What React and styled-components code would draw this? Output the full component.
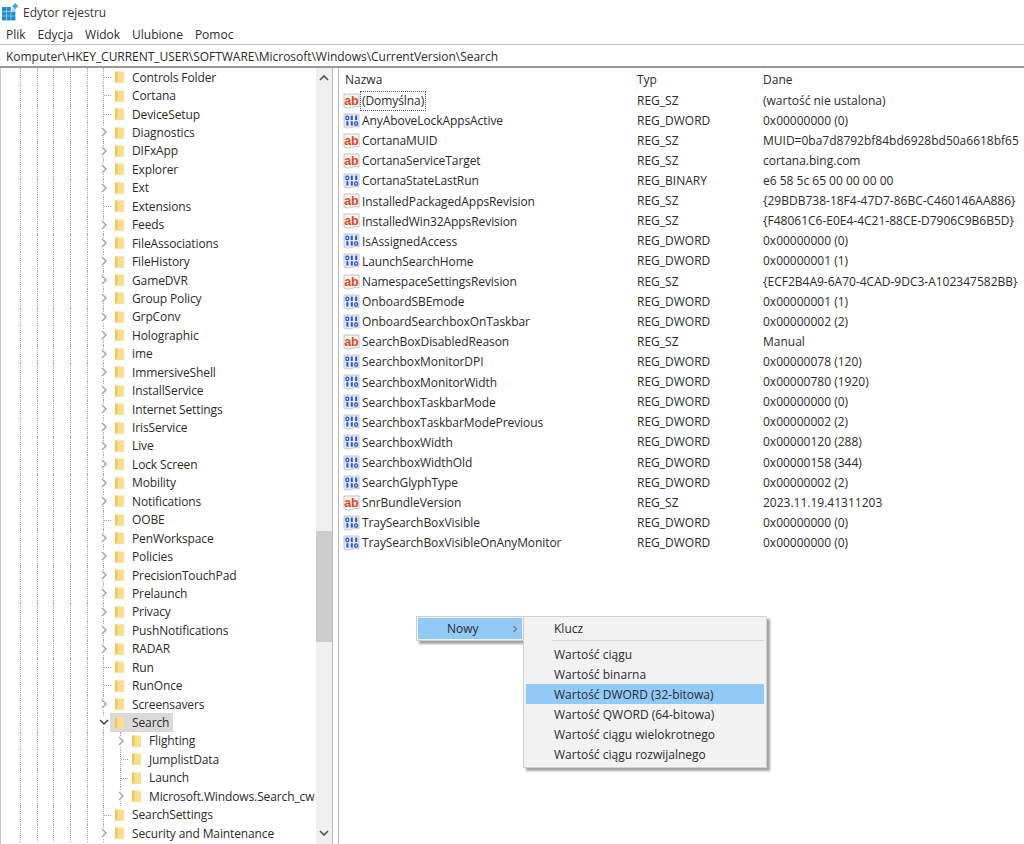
import React from "react";
import styled, { createGlobalStyle } from "styled-components";

const GlobalStyle = createGlobalStyle`
  html, body {
    margin: 0;
    padding: 0;
    background: #fff;
    overflow: hidden;
  }
  body {
    font-family: "Open Sans", "Noto Sans", "Liberation Sans", sans-serif;
    color: #2b2b2b;
  }
`;

const Window = styled.div`
  position: relative;
  width: 1024px;
  height: 844px;
  display: flex;
  flex-direction: column;
  overflow: hidden;
  background: #fff;
  font-size: 12px;
`;

const TitleBar = styled.div`
  height: 24px;
  display: flex;
  align-items: center;
  gap: 4px;
  padding-left: 2px;
  font-size: 12px;
  color: #333;
`;

const MenuBar = styled.div`
  height: 20px;
  display: flex;
  align-items: center;
  padding-left: 6px;
  gap: 12px;
`;

const AddressBar = styled.div`
  height: 21px;
  line-height: 23px;
  padding-left: 6px;
  border-top: 1px solid #c4c4c4;
  border-bottom: 2px solid #9a9a9a;
  box-sizing: content-box;
  letter-spacing: -0.03px;
  white-space: nowrap;
  overflow: hidden;
`;

const Panes = styled.div`
  flex: 1;
  display: flex;
  min-height: 0;
`;

const TreePane = styled.div`
  position: relative;
  width: 332px;
  display: flex;
  border-left: 1px solid #c8c8c8;
  box-sizing: border-box;
`;

const TreeList = styled.div`
  flex: 1;
  padding-top: 0;
  overflow: hidden;
  letter-spacing: -0.12px;
`;

const TreeRow = styled.div`
  position: relative;
  height: 18.44px;
  display: flex;
  align-items: center;
  padding-left: ${(p) => (p.$child ? 130 : 113)}px;
  white-space: nowrap;
`;

const Guide = styled.span`
  position: absolute;
  top: 0;
  bottom: 0;
  left: ${(p) => p.$x}px;
  border-left: 1px dotted #a8a8a8;
`;

const Tick = styled.span`
  position: absolute;
  top: 9px;
  left: ${(p) => p.$x}px;
  width: 7px;
  border-top: 1px dotted #a8a8a8;
`;

const Expander = styled.svg`
  position: absolute;
  left: ${(p) => p.$x}px;
  top: 4px;
  width: 10px;
  height: 10px;
  background: #fff;
`;

const RowLabel = styled.span`
  margin-left: 6px;
  padding: 0 1px;
`;

const SelectedBand = styled.span`
  position: absolute;
  left: 109px;
  top: 0;
  width: 63px;
  height: 100%;
  background: #d9d9d9;
`;

const RowContent = styled.span`
  position: relative;
  display: flex;
  align-items: center;
`;

const Scrollbar = styled.div`
  width: 16px;
  display: flex;
  flex-direction: column;
  background: #f0f0f0;
`;

const ScrollButton = styled.div`
  height: ${(p) => p.$height}px;
  display: flex;
  align-items: center;
  justify-content: center;
`;

const ScrollTrack = styled.div`
  flex: 1;
  padding-top: 443px;
`;

const ScrollThumb = styled.div`
  height: 111px;
  background: #cdcdcd;
`;

const Splitter = styled.div`
  width: 7px;
  box-sizing: border-box;
  border: solid #b9b9b9;
  border-width: 0 1px;
`;

const ListPane = styled.div`
  flex: 1;
  min-width: 0;
  display: flex;
  flex-direction: column;
`;

const ListHeader = styled.div`
  height: 23px;
  display: grid;
  grid-template-columns: 292px 126px 1fr;
  align-items: center;
  padding-left: 6px;
`;

const HeaderCell = styled.div`
  height: 100%;
  line-height: 24px;
  border-right: ${(p) => (p.$last ? "none" : "1px solid #f0f0f0")};
`;

const ListRow = styled.div`
  height: 20.12px;
  display: grid;
  grid-template-columns: 298px 126px 1fr;
  align-items: center;
  white-space: nowrap;
`;

const NameCell = styled.div`
  display: flex;
  align-items: center;
  padding-left: 4px;
  letter-spacing: -0.08px;
`;

const NameText = styled.span`
  padding: 0 2px;
  line-height: 20px;
  outline: ${(p) => (p.$focus ? "1px dotted #555" : "none")};
  outline-offset: -1px;
`;

const ValueCell = styled.span`
  padding-bottom: 2px;
`;

const Menu = styled.div`
  position: absolute;
  box-sizing: border-box;
  background: #f2f2f2;
  border: 1px solid #d0d0d0;
  padding: 2px;
  box-shadow: 3px 3px 2px rgba(90, 90, 90, 0.55);
`;

const ParentMenu = styled(Menu)`
  left: 416px;
  top: 616px;
  width: 108px;
  height: 25px;
  padding: 1px;
`;

const SubMenu = styled(Menu)`
  left: 523px;
  top: 616px;
  width: 244px;
  height: 152px;
  padding-top: 1px;
`;

const ParentItem = styled.div`
  height: 21px;
  display: flex;
  align-items: center;
  justify-content: space-between;
  padding: 0 4px 0 29px;
  background: #91c9f7;
`;

const MenuItem = styled.div`
  height: 20px;
  line-height: 21px;
  padding-left: 28px;
  background: ${(p) => (p.$active ? "#91c9f7" : "transparent")};
`;

const MenuSeparator = styled.div`
  height: 1px;
  margin: 2px 0 3px 26px;
  background: #d7d7d7;
`;

const menuLabels = ["Plik", "Edycja", "Widok", "Ulubione", "Pomoc"];

const treeItems = [
  ["Controls Folder"],
  ["Cortana"],
  ["DeviceSetup"],
  ["Diagnostics", true],
  ["DIFxApp", true],
  ["Explorer", true],
  ["Ext", true],
  ["Extensions"],
  ["Feeds", true],
  ["FileAssociations", true],
  ["FileHistory", true],
  ["GameDVR", true],
  ["Group Policy", true],
  ["GrpConv", true],
  ["Holographic", true],
  ["ime", true],
  ["ImmersiveShell", true],
  ["InstallService", true],
  ["Internet Settings", true],
  ["IrisService", true],
  ["Live", true],
  ["Lock Screen", true],
  ["Mobility", true],
  ["Notifications", true],
  ["OOBE"],
  ["PenWorkspace", true],
  ["Policies", true],
  ["PrecisionTouchPad", true],
  ["Prelaunch", true],
  ["Privacy", true],
  ["PushNotifications", true],
  ["RADAR", true],
  ["Run"],
  ["RunOnce"],
  ["Screensavers", true],
  ["Search", true, "open"],
  ["Flighting", true, "child"],
  ["JumplistData", false, "child"],
  ["Launch", false, "child"],
  ["Microsoft.Windows.Search_cw", true, "child"],
  ["SearchSettings"],
  ["Security and Maintenance", true],
];

const values = [
  ["(Domyślna)", "REG_SZ", "(wartość nie ustalona)"],
  ["AnyAboveLockAppsActive", "REG_DWORD", "0x00000000 (0)"],
  ["CortanaMUID", "REG_SZ", "MUID=0ba7d8792bf84bd6928bd50a6618bf65"],
  ["CortanaServiceTarget", "REG_SZ", "cortana.bing.com"],
  ["CortanaStateLastRun", "REG_BINARY", "e6 58 5c 65 00 00 00 00"],
  ["InstalledPackagedAppsRevision", "REG_SZ", "{29BDB738-18F4-47D7-86BC-C460146AA886}"],
  ["InstalledWin32AppsRevision", "REG_SZ", "{F48061C6-E0E4-4C21-88CE-D7906C9B6B5D}"],
  ["IsAssignedAccess", "REG_DWORD", "0x00000000 (0)"],
  ["LaunchSearchHome", "REG_DWORD", "0x00000001 (1)"],
  ["NamespaceSettingsRevision", "REG_SZ", "{ECF2B4A9-6A70-4CAD-9DC3-A102347582BB}"],
  ["OnboardSBEmode", "REG_DWORD", "0x00000001 (1)"],
  ["OnboardSearchboxOnTaskbar", "REG_DWORD", "0x00000002 (2)"],
  ["SearchBoxDisabledReason", "REG_SZ", "Manual"],
  ["SearchboxMonitorDPI", "REG_DWORD", "0x00000078 (120)"],
  ["SearchboxMonitorWidth", "REG_DWORD", "0x00000780 (1920)"],
  ["SearchboxTaskbarMode", "REG_DWORD", "0x00000000 (0)"],
  ["SearchboxTaskbarModePrevious", "REG_DWORD", "0x00000002 (2)"],
  ["SearchboxWidth", "REG_DWORD", "0x00000120 (288)"],
  ["SearchboxWidthOld", "REG_DWORD", "0x00000158 (344)"],
  ["SearchGlyphType", "REG_DWORD", "0x00000002 (2)"],
  ["SnrBundleVersion", "REG_SZ", "2023.11.19.41311203"],
  ["TraySearchBoxVisible", "REG_DWORD", "0x00000000 (0)"],
  ["TraySearchBoxVisibleOnAnyMonitor", "REG_DWORD", "0x00000000 (0)"],
];

const guideLines = [20, 37, 53, 70, 87];

const gridCells = [
  [0, 0], [1, 0],
  [0, 1], [1, 1], [2, 1],
  [0, 2], [1, 2], [2, 2],
];

const AppIcon = () => (
  <svg width="17" height="18" viewBox="0 0 17 18">
    <g fill="#1c8cd6">
      {gridCells.map(([x, y]) => (
        <rect key={`${x}-${y}`} x={x * 4.6} y={4 + y * 4.6} width="4.2" height="4.2" />
      ))}
    </g>
    <rect x="10" y="5.5" width="3.6" height="3" fill="#a8d5f2" />
    <rect x="11" y="1" width="4.4" height="4.4" fill="#4aa6e4" transform="rotate(45 13.2 3.2)" />
  </svg>
);

const FolderIcon = () => (
  <svg width="11" height="14" viewBox="0 0 11 14">
    <path d="M1 1.5 H10 V13 H1 Z" fill="#fcdf8e" />
    <path d="M1 1.5 H3.5 V11 L1 13 Z" fill="#f3c654" />
  </svg>
);

const StringIcon = () => (
  <svg width="17" height="17" viewBox="0 0 17 17">
    <path d="M1 1 H16 V14 Q12 12.5 8.5 14.5 Q4 16 1 14 Z" fill="#fbf3ee" stroke="#c4c4c4" />
    <text x="1.2" y="11.5" fontFamily="Liberation Sans, sans-serif" fontWeight="700" fontSize="12.5" fill="#d84a2b">
      ab
    </text>
  </svg>
);

const bits = [
  [0, 1, 1],
  [1, 1, 0],
];

const BinaryIcon = () => (
  <svg width="17" height="17" viewBox="0 0 17 17">
    <path d="M1 1 H16 V14 Q12 12.5 8.5 14.5 Q4 16 1 14 Z" fill="#e4eafb" stroke="#c4c8d4" />
    {bits.map((row, y) =>
      row.map((bit, x) =>
        bit ? (
          <rect key={`${x}${y}`} x={3.4 + x * 4.4} y={2.6 + y * 5.6} width="2" height="4.4" fill="#2a56c6" />
        ) : (
          <rect key={`${x}${y}`} x={2.9 + x * 4.4} y={3.2 + y * 5.6} width="2.8" height="3.4" rx="1" fill="none" stroke="#2a56c6" strokeWidth="1.3" />
        )
      )
    )}
  </svg>
);

const Chevron = ({ x, open }) => (
  <Expander $x={x} viewBox="0 0 10 10">
    <path
      d={open ? "M1 3 L5 7 L9 3" : "M3 1 L7 5 L3 9"}
      fill="none"
      stroke={open ? "#404040" : "#a6a6a6"}
      strokeWidth="1.5"
    />
  </Expander>
);

const TreeItem = ({ name, expandable, kind }) => {
  const child = kind === "child";
  const open = kind === "open";
  return (
    <TreeRow $child={child}>
      {guideLines.map((x) => (
        <Guide key={x} $x={x - 1} />
      ))}
      <Guide $x={102} />
      {child && <Guide $x={119} />}
      {open && <SelectedBand />}
      {!expandable && <Tick $x={child ? 120 : 103} />}
      {expandable && <Chevron x={child ? 115 : 98} open={open} />}
      <RowContent>
        <FolderIcon />
        <RowLabel>{name}</RowLabel>
      </RowContent>
    </TreeRow>
  );
};

export default function App() {
  return (
    <Window>
      <GlobalStyle />
      <TitleBar>
        <AppIcon />
        Edytor rejestru
      </TitleBar>
      <MenuBar>
        {menuLabels.map((label) => (
          <span key={label}>{label}</span>
        ))}
      </MenuBar>
      <AddressBar>Komputer\HKEY_CURRENT_USER\SOFTWARE\Microsoft\Windows\CurrentVersion\Search</AddressBar>
      <Panes>
        <TreePane>
          <TreeList>
            {treeItems.map(([name, expandable, kind]) => (
              <TreeItem key={name} name={name} expandable={expandable} kind={kind} />
            ))}
          </TreeList>
          <Scrollbar>
            <ScrollButton $height={20}>
              <svg width="10" height="6" viewBox="0 0 10 6">
                <path d="M1 5 L5 1 L9 5" fill="none" stroke="#555" strokeWidth="1.7" />
              </svg>
            </ScrollButton>
            <ScrollTrack>
              <ScrollThumb />
            </ScrollTrack>
            <ScrollButton $height={22}>
              <svg width="10" height="6" viewBox="0 0 10 6">
                <path d="M1 1 L5 5 L9 1" fill="none" stroke="#555" strokeWidth="1.7" />
              </svg>
            </ScrollButton>
          </Scrollbar>
        </TreePane>
        <Splitter />
        <ListPane>
          <ListHeader>
            <HeaderCell>Nazwa</HeaderCell>
            <HeaderCell>Typ</HeaderCell>
            <HeaderCell $last>Dane</HeaderCell>
          </ListHeader>
          {values.map(([name, type, data], i) => (
            <ListRow key={name}>
              <NameCell>
                {type === "REG_SZ" ? <StringIcon /> : <BinaryIcon />}
                <NameText $focus={i === 0}>{name}</NameText>
              </NameCell>
              <ValueCell>{type}</ValueCell>
              <ValueCell>{data}</ValueCell>
            </ListRow>
          ))}
        </ListPane>
      </Panes>
      <ParentMenu>
        <ParentItem>
          Nowy
          <svg width="6" height="8" viewBox="0 0 6 8">
            <path d="M1.5 1 L4.5 4 L1.5 7" fill="none" stroke="#444" />
          </svg>
        </ParentItem>
      </ParentMenu>
      <SubMenu>
        <MenuItem>Klucz</MenuItem>
        <MenuSeparator />
        <MenuItem>Wartość ciągu</MenuItem>
        <MenuItem>Wartość binarna</MenuItem>
        <MenuItem $active>Wartość DWORD (32-bitowa)</MenuItem>
        <MenuItem>Wartość QWORD (64-bitowa)</MenuItem>
        <MenuItem>Wartość ciągu wielokrotnego</MenuItem>
        <MenuItem>Wartość ciągu rozwijalnego</MenuItem>
      </SubMenu>
    </Window>
  );
}
